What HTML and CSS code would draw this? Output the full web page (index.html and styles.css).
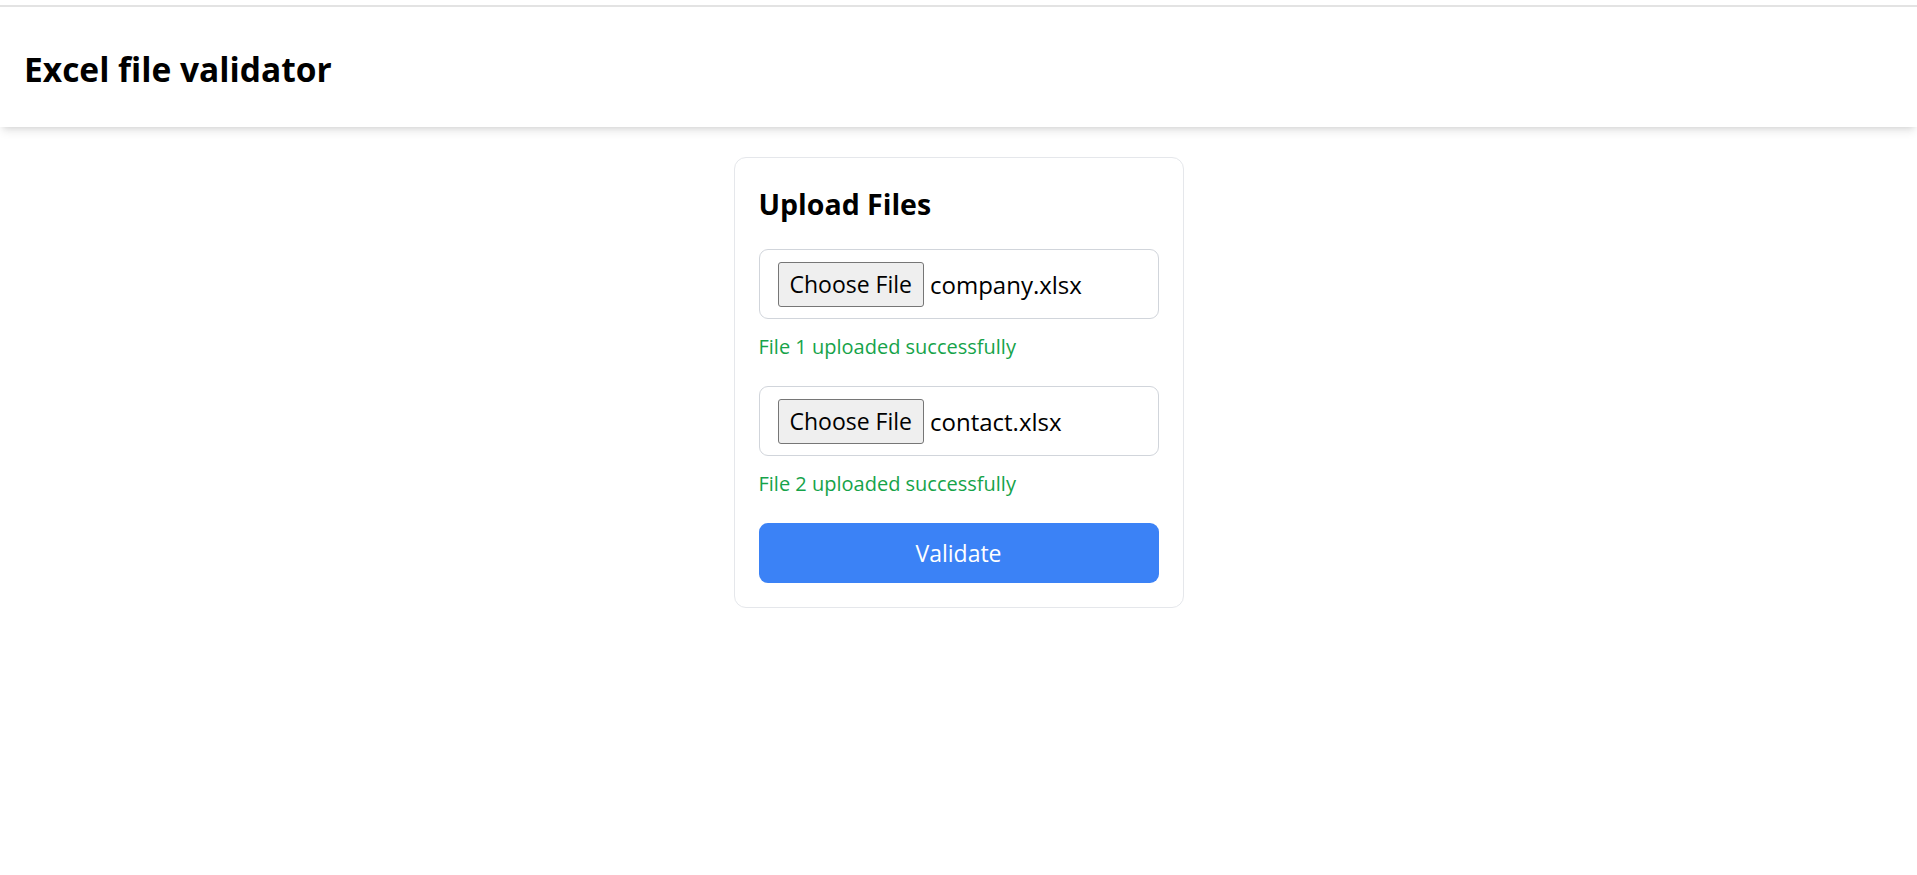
FILE: index.html
```html
<!DOCTYPE html>
<html lang="en">
<head>
<meta charset="utf-8">
<title>Excel file validator</title>
<link rel="stylesheet" href="styles.css">
</head>
<body>
<div class="topline"></div>
<header class="appbar">
  <h1 class="app-title">Excel file validator</h1>
</header>
<main class="page">
  <section class="card">
    <h2 class="card-title">Upload Files</h2>
    <div class="file-field">
      <span class="file-btn">Choose File</span>
      <span class="file-name">company.xlsx</span>
    </div>
    <p class="status">File 1 uploaded successfully</p>
    <div class="file-field">
      <span class="file-btn">Choose File</span>
      <span class="file-name">contact.xlsx</span>
    </div>
    <p class="status">File 2 uploaded successfully</p>
    <button class="validate" type="button">Validate</button>
  </section>
</main>
</body>
</html>
```

FILE: styles.css
```css
html, body {
  margin: 0;
  padding: 0;
  background: #ffffff;
}
body {
  font-family: "Open Sans", "Noto Sans", "Liberation Sans", sans-serif;
  color: #000000;
}
.topline {
  margin-top: 5px;
  height: 2px;
  background: #e3e3e3;
}
.appbar {
  height: 120px;
  box-sizing: border-box;
  padding: 3px 24px 0;
  display: flex;
  align-items: center;
  background: #ffffff;
  box-shadow: 0 6px 9px -2px rgba(0,0,0,0.10), 0 3px 6px -3px rgba(0,0,0,0.10);
  position: relative;
}
.app-title {
  margin: 0;
  font-size: 33.5px;
  line-height: 60px;
  font-weight: 700;
}
.page {
  display: flex;
  justify-content: center;
  padding-top: 30px;
}
.card {
  width: 450px;
  box-sizing: border-box;
  border: 1px solid #e5e7eb;
  border-radius: 12px;
  padding: 24px;
  background: #ffffff;
}
.card-title {
  margin: 0 0 23px;
  font-size: 28.5px;
  line-height: 44px;
  font-weight: 700;
}
.file-field {
  height: 70px;
  box-sizing: border-box;
  border: 1px solid #d1d5db;
  border-radius: 9px;
  padding: 0 18px;
  display: flex;
  align-items: center;
}
.file-btn {
  height: 45px;
  box-sizing: border-box;
  border: 1px solid #767676;
  border-radius: 3px;
  background: #efefef;
  padding: 0 11px;
  display: flex;
  align-items: center;
  font-size: 23px;
  margin-right: 6px;
}
.file-name {
  font-size: 24px;
}
.status {
  margin: 12px 0 24px;
  font-size: 20px;
  line-height: 31px;
  color: #16a34a;
}
.validate {
  display: block;
  width: 100%;
  height: 60px;
  border: none;
  border-radius: 9px;
  background: #3b82f6;
  color: #ffffff;
  font-family: inherit;
  font-size: 23px;
  padding: 0;
}
```
